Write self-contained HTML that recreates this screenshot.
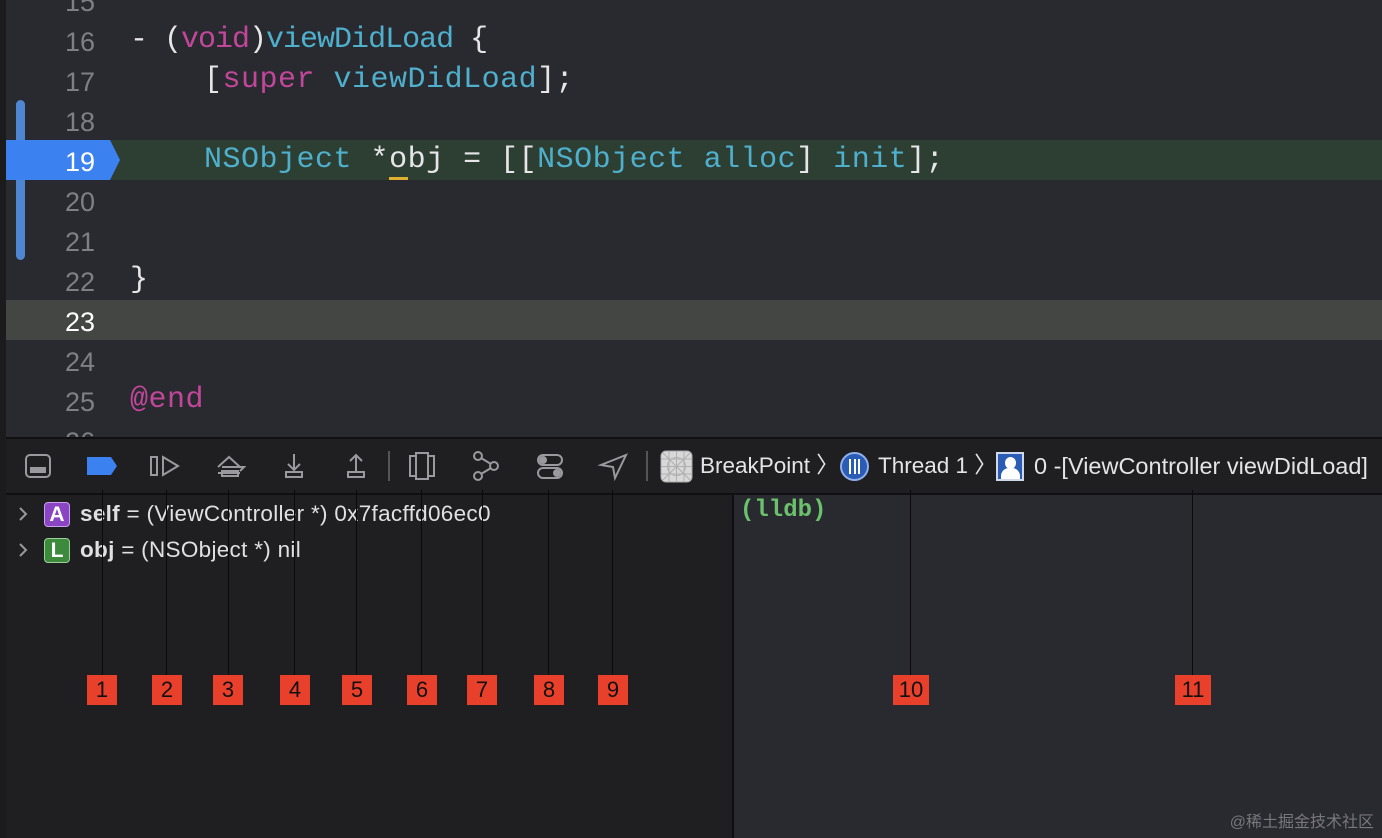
<!DOCTYPE html>
<html><head><meta charset="utf-8"><style>
*{margin:0;padding:0;box-sizing:border-box}
body{width:1382px;height:838px;overflow:hidden;background:#292a30;position:relative;font-family:"Liberation Sans",sans-serif}
.edge{position:absolute;left:0;top:0;width:6px;height:838px;background:#1b1b1d}
.code{position:absolute;left:6px;top:0;width:1376px;height:437px;background:#292a30}
.ln{position:absolute;left:0;width:95px;text-align:right;font-family:"Liberation Sans",sans-serif;font-size:27px;color:#7f8086;line-height:40px}
.tx{position:absolute;left:130px;font-family:"Liberation Mono",monospace;font-size:30px;line-height:40px;color:#e6e6e8;white-space:pre;letter-spacing:0.5px}
.k{color:#c2479a}.t{color:#4eb0cc}
.bar{position:absolute;left:6px;top:437px;width:1376px;height:58px;background:#1f1f22;border-top:2px solid #101012;border-bottom:2px solid #101012}
.vars{position:absolute;left:6px;top:495px;width:726px;height:343px;background:#1f1e21}
.cons{position:absolute;left:734px;top:495px;width:648px;height:343px;background:#292a30}
.div{position:absolute;left:732px;top:495px;width:2px;height:343px;background:#0e0e10}
.lab{position:absolute;top:675px;height:30px;background:#e8402a;color:#111;font-size:22px;text-align:center;line-height:30px}
.vl{position:absolute;width:1px;background:#0a0a0a}
.var{position:absolute;left:0;font-size:22.5px;color:#e0e0e2;white-space:nowrap;height:30px;line-height:30px}
.chev{position:absolute;left:18px;top:8px}
.badge{position:absolute;left:44px;top:3px;width:26px;height:25px;border-radius:4px;text-align:center;line-height:24px;font-weight:bold;font-size:21px;color:#fff}
.vt{position:absolute;left:80px;top:0;letter-spacing:0.3px}
.crumb{position:absolute;top:452px;font-size:22.5px;color:#e4e4e6;line-height:28px;white-space:nowrap}
</style></head><body>
<div class="edge"></div>
<div class="code">
<div style="position:absolute;left:0;top:140px;width:1376px;height:40px;background:#2d3e33"></div>
<div style="position:absolute;left:0;top:300px;width:1376px;height:40px;background:#444644"></div>
<div style="position:absolute;left:10px;top:100px;width:9px;height:160px;border-radius:5px;background:#4f86d1"></div>
<svg style="position:absolute;left:0;top:140px" width="116" height="40"><path d="M0 0H104L114 20L104 40H0Z" fill="#3b82f0"/></svg>
</div>
<div class="ln" style="top:-18px">15</div>
<div class="ln" style="top:22px">16</div><div class="ln" style="top:62px">17</div><div class="ln" style="top:102px">18</div>
<div class="ln" style="top:142px;color:#fff">19</div><div class="ln" style="top:182px">20</div><div class="ln" style="top:222px">21</div>
<div class="ln" style="top:262px">22</div><div class="ln" style="top:302px;color:#fff">23</div><div class="ln" style="top:342px">24</div>
<div class="ln" style="top:382px">25</div><div class="ln" style="top:422px">26</div>
<div class="tx" style="top:20px;letter-spacing:-1px">- (<span class="k">void</span>)<span class="t">viewDidLoad</span> {</div>
<div class="tx" style="top:60px">    [<span class="k">super</span> <span class="t">viewDidLoad</span>];</div>
<div class="tx" style="top:140px">    <span class="t">NSObject</span> *<span style="border-bottom:3px solid #e0b030">o</span>bj = [[<span class="t">NSObject</span> <span class="t">alloc</span>] <span class="t">init</span>];</div>
<div class="tx" style="top:260px">}</div>
<div class="tx" style="top:380px"><span class="k">@end</span></div>

<div class="bar"></div>
<svg style="position:absolute;left:0;top:437px" width="660" height="58" fill="none" stroke="#9a9a9e" stroke-width="2">
<rect x="26" y="18" width="24" height="22" rx="4"/><rect x="30" y="30" width="16" height="6" fill="#9a9a9e" stroke="none"/>
<path d="M87 20H111L117 29L111 38H87Z" fill="#3b82f0" stroke="none"/>
<rect x="151" y="20" width="6" height="18"/><path d="M163 20L178 29L163 38Z"/>
<path d="M218 30L229 20L240 30M222 30H244L240 34M218 36H240"/><rect x="222" y="34" width="16" height="5"/>
<path d="M294 17V32M288 27L294 33L300 27"/><rect x="286" y="35" width="16" height="5"/>
<path d="M356 34V19M350 24L356 18L362 24"/><rect x="348" y="35" width="16" height="5"/>
<path d="M389 14V44" stroke="#555"/>
<rect x="410" y="19" width="6" height="20"/><rect x="416" y="16" width="12" height="26"/><rect x="428" y="19" width="6" height="20"/>
<circle cx="478" cy="19" r="4"/><circle cx="478" cy="39" r="4"/><circle cx="494" cy="29" r="4"/><path d="M481 21L491 27M481 37L491 31"/>
<rect x="538" y="18" width="24" height="10" rx="5"/><rect x="538" y="31" width="24" height="10" rx="5"/>
<circle cx="543" cy="23" r="3" fill="#9a9a9e"/><circle cx="557" cy="36" r="3" fill="#9a9a9e"/>
<path d="M626 18L601 28L613 30L615 41Z"/>
<path d="M647 14V44" stroke="#555"/>
</svg>
<svg style="position:absolute;left:660px;top:450px" width="33" height="33"><rect x="1" y="1" width="31" height="31" rx="5" fill="#d8d8d8" stroke="#aaa"/><g stroke="#b0b0b0" stroke-width="1" fill="none"><path d="M1 9H32M1 16.5H32M1 24H32M9 1V32M16.5 1V32M24 1V32M3 3L30 30M30 3L3 30"/><circle cx="16.5" cy="16.5" r="9"/></g></svg>
<div class="crumb" style="left:700px">BreakPoint 〉</div>
<div style="position:absolute;left:840px;top:452px;width:29px;height:29px;border-radius:50%;background:#2a5bb5;border:2px solid #8fb0ea"></div>
<div style="position:absolute;left:849px;top:459px;width:11px;height:15px;border-left:2px solid #fff;border-right:2px solid #fff"></div>
<div style="position:absolute;left:853.5px;top:459px;width:2px;height:15px;background:#fff"></div>
<div class="crumb" style="left:878px">Thread 1 〉</div>
<div style="position:absolute;left:996px;top:452px;width:28px;height:29px;background:#2a5bb5;border:2px solid #cfd8e8;overflow:hidden"><div style="position:absolute;left:7px;top:3px;width:11px;height:12px;border-radius:50%;background:#fff"></div><div style="position:absolute;left:3px;top:14px;width:19px;height:12px;border-radius:8px 8px 0 0;background:#fff"></div></div>
<div class="crumb" style="left:1034px;font-size:23.5px">0 -[ViewController viewDidLoad]</div>

<div class="vars"></div><div class="cons"></div><div class="div"></div>
<div class="var" style="top:499px"><svg class="chev" width="10" height="14"><path d="M2 1L8 7L2 13" stroke="#999" stroke-width="2" fill="none"/></svg><span class="badge" style="background:#8a44c4;border:1px solid #c9a0ee">A</span><span class="vt"><b>self</b> = (ViewController *) 0x7facffd06ec0</span></div>
<div class="var" style="top:535px"><svg class="chev" width="10" height="14"><path d="M2 1L8 7L2 13" stroke="#999" stroke-width="2" fill="none"/></svg><span class="badge" style="background:#3d8a3d;border:1px solid #9ad09a">L</span><span class="vt"><b>obj</b> = (NSObject *) nil</span></div>
<div style="position:absolute;left:740px;top:497px;font-family:'Liberation Mono',monospace;font-weight:bold;font-size:24px;color:#6cc16c">(lldb)</div>

<div class="vl" style="left:102px;top:490px;height:185px"></div><div class="vl" style="left:166px;top:490px;height:185px"></div>
<div class="vl" style="left:228px;top:490px;height:185px"></div><div class="vl" style="left:294px;top:490px;height:185px"></div>
<div class="vl" style="left:356px;top:490px;height:185px"></div><div class="vl" style="left:421px;top:490px;height:185px"></div>
<div class="vl" style="left:482px;top:490px;height:185px"></div><div class="vl" style="left:548px;top:490px;height:185px"></div>
<div class="vl" style="left:612px;top:490px;height:185px"></div><div class="vl" style="left:910px;top:490px;height:185px"></div>
<div class="vl" style="left:1192px;top:490px;height:185px"></div>
<div class="lab" style="left:87px;width:30px">1</div><div class="lab" style="left:152px;width:30px">2</div>
<div class="lab" style="left:213px;width:30px">3</div><div class="lab" style="left:280px;width:30px">4</div>
<div class="lab" style="left:342px;width:30px">5</div><div class="lab" style="left:407px;width:30px">6</div>
<div class="lab" style="left:467px;width:30px">7</div><div class="lab" style="left:534px;width:30px">8</div>
<div class="lab" style="left:598px;width:30px">9</div><div class="lab" style="left:893px;width:36px">10</div>
<div class="lab" style="left:1175px;width:36px">11</div>
<div style="position:absolute;right:8px;top:808px;font-size:16px;color:#77777c;font-family:'Liberation Sans','Noto Sans CJK SC',sans-serif">@稀土掘金技术社区</div>
</body></html>
